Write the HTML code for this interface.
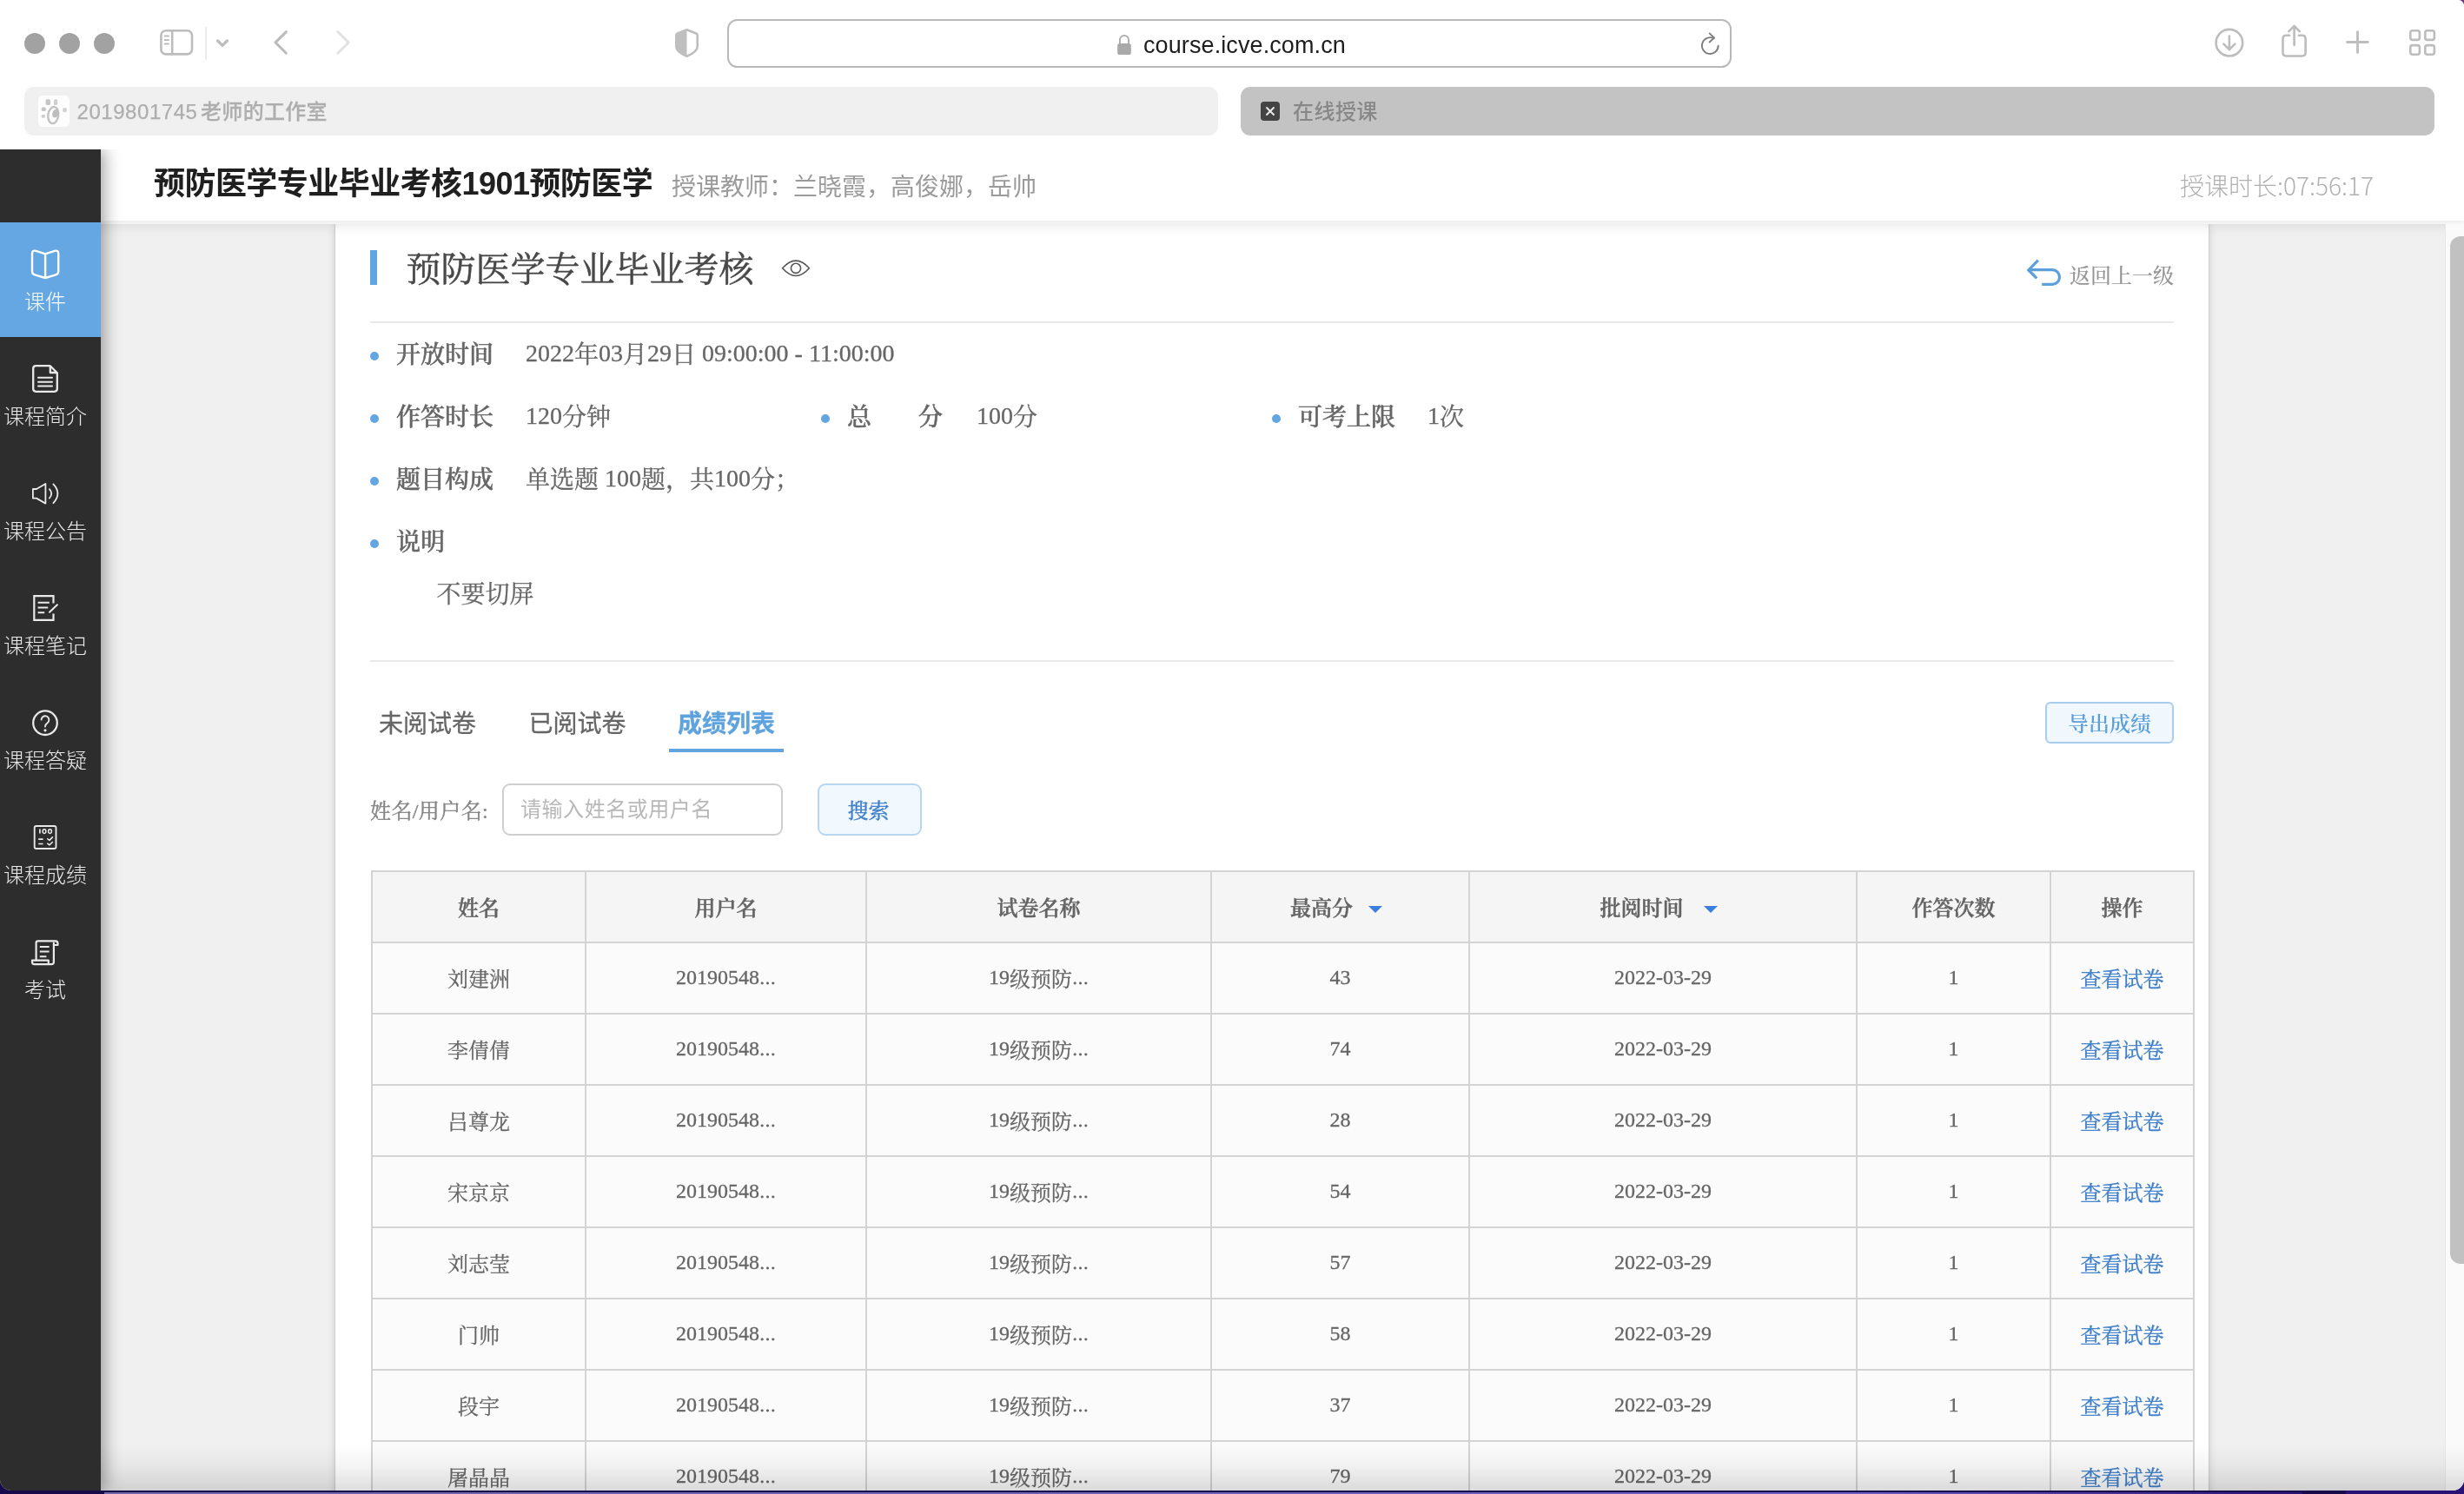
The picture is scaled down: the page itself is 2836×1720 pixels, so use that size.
<!DOCTYPE html>
<html lang="zh-CN">
<head>
<meta charset="utf-8">
<title>在线授课</title>
<style>
*{box-sizing:border-box;margin:0;padding:0}
html,body{width:2836px;height:1720px;overflow:hidden;background:#fff}
body{position:relative;will-change:transform;font-family:"Liberation Sans","Noto Sans CJK SC",sans-serif;color:#666}
.abs{position:absolute}
.sans{font-family:"Liberation Sans","Noto Sans CJK SC",sans-serif}
.serif{font-family:"Liberation Serif","Noto Serif CJK SC",serif}
svg{position:absolute;overflow:visible}
/* ---------- browser chrome ---------- */
#chrome{position:absolute;left:0;top:0;width:2836px;height:172px;background:#fff}
#trc{position:absolute;right:0;top:0;width:7px;height:7px;background:radial-gradient(circle at 0 100%,rgba(123,45,142,0) 6.6px,#7b2d8e 7.8px)}
.tl{position:absolute;top:38px;width:24px;height:24px;border-radius:50%;background:#a2a2a2}
#urlbar{position:absolute;left:837px;top:22px;width:1156px;height:56px;border:2px solid #b9b9b9;border-radius:11.5px;background:transparent}
#urltext{position:absolute;left:1316px;top:36px;font-size:27px;line-height:32px;color:#1d1d1d;letter-spacing:.1px;white-space:nowrap}
.tab{position:absolute;top:100px;height:56px;border-radius:11px}
#tab1{left:28px;width:1374px;background:#f0f0f0}
#tab2{left:1428px;width:1374px;background:#c3c3c3}
.tabtxt{position:absolute;top:12px;font-size:24px;line-height:32px;white-space:nowrap}
/* ---------- page ---------- */
#page{position:absolute;left:0;top:172px;width:2836px;height:1544px;background:#f0f0f0;overflow:hidden;border-radius:0 0 13px 13px;z-index:2}
#side{position:absolute;left:0;top:0;width:116px;height:1544px;background:#2d2d2d;z-index:5;box-shadow:4px 0 18px rgba(0,0,0,.38)}
.si{position:absolute;left:0;width:116px;height:132px;color:#e9e9e9}
.si.on{background:#65a7e2;color:#fff}
.si span{position:absolute;left:-16px;width:136px;text-align:center;top:76px;font-size:24px;line-height:32px;font-weight:300;white-space:nowrap}
.si svg{left:0;top:0;width:116px;height:132px;fill:none;stroke:currentColor;stroke-width:2.2;stroke-linecap:round;stroke-linejoin:round}
#head{position:absolute;left:116px;top:0;width:2720px;height:82px;background:#fff;z-index:4;box-shadow:0 2px 8px rgba(0,0,0,.05)}
#gap{position:absolute;left:116px;top:82px;width:2720px;height:4px;background:#f8f8f8;z-index:3}
#htitle{position:absolute;left:61px;top:16px;font-size:36px;line-height:48px;font-weight:700;color:#1f1f1f;white-space:nowrap;letter-spacing:-.55px}
#hsub{position:absolute;left:657px;top:24px;font-size:28px;line-height:40px;color:#9b9b9b;white-space:nowrap}
#htime{position:absolute;right:104px;top:21px;font-size:28px;line-height:40px;color:#b0b0b0;font-weight:300;white-space:nowrap;font-family:"Noto Sans CJK SC","Liberation Sans",sans-serif}
#card{position:absolute;left:386px;top:86px;width:2156px;height:1500px;background:#fff;box-shadow:0 0 0 1px rgba(0,0,0,.07),0 0 9px rgba(0,0,0,.17);z-index:2}
#hshadow{position:absolute;left:116px;top:86px;width:2698px;height:16px;background:linear-gradient(to bottom,rgba(0,0,0,.05),rgba(0,0,0,.012) 60%,rgba(0,0,0,0));z-index:3}
#strack{position:absolute;left:2814px;top:86px;width:22px;height:1460px;background:#fafafa;border-left:1px solid #e6e6e6;z-index:6}
#sthumb{position:absolute;left:2820px;top:100px;width:30px;height:1183px;border-radius:12px;background:#c1c1c1;z-index:7}
#bottomfade{position:absolute;left:116px;bottom:0;width:2720px;height:54px;background:linear-gradient(to bottom,rgba(0,0,0,0),rgba(0,0,0,.045) 50%,rgba(0,0,0,.13));z-index:8}
#deskstrip{position:absolute;left:0;top:1696px;width:2836px;height:24px;background:#160a4a;z-index:1}
#deskstrip i{position:absolute;left:120px;top:22px;width:2530px;height:2px;background:linear-gradient(to right,#6f66a8,#6b5cc0 80%,#2a1174)}
#deskstrip u{position:absolute;left:2700px;top:0;width:136px;height:24px;background:#2a1174}

/* ---------- card content (coords relative to card: abs-386, abs-258) ---------- */
#card .t{position:absolute;white-space:nowrap;line-height:1}
#card .sf{font-family:"Liberation Serif","Noto Serif CJK SC",serif}
#bar{position:absolute;left:40px;top:30px;width:8px;height:40px;background:#62a6e1}
#ctitle{left:81.5px;top:33px;font-size:40px;color:#484848;font-weight:400;-webkit-text-stroke:.5px currentColor}
#back{left:1996px;top:48px;font-size:24px;color:#949494;font-weight:500}
.hr{position:absolute;left:40px;width:2076px;height:2px;background:#e9e9e9}
.dot{position:absolute;width:10px;height:10px;border-radius:50%;background:#62a6e1}
.lab{font-size:28px;font-weight:500;-webkit-text-stroke:.55px currentColor;color:#666;width:110px}
.val{font-size:28px;color:#666;font-weight:400;-webkit-text-stroke:.3px currentColor}
.tabx{font-size:28px;color:#666;font-family:"Liberation Sans","Noto Sans CJK SC",sans-serif;-webkit-text-stroke:.3px currentColor}
#uline{position:absolute;left:384px;top:604px;width:132px;height:4px;background:#62a6e1}
#export{position:absolute;left:1968px;top:550px;width:148px;height:48px;border:2px solid #a9cdee;border-radius:6px;background:#f1f8fd}
#slabel{left:40px;top:663.5px;font-size:24px;letter-spacing:.4px;color:#858585;-webkit-text-stroke:.4px currentColor}
#sinput{position:absolute;left:191.5px;top:644px;width:323.5px;height:60px;border:2px solid #cfcfcf;border-radius:9px;background:#fff}
#sph{left:213px;top:662px;letter-spacing:.55px;font-size:24px;color:#b8b8b8;font-family:"Liberation Sans","Noto Sans CJK SC",sans-serif}
#sbtn{position:absolute;left:555px;top:644px;width:120px;height:60px;border:2px solid #b7d6f2;border-radius:9px;background:#f1f8fe}
#tbl{position:absolute;left:41px;top:744px;border-collapse:collapse;table-layout:fixed;width:2097px;font-family:"Liberation Serif","Noto Serif CJK SC",serif;font-size:24px;color:#666}
#tbl td,#tbl th{border:2px solid #d4d4d4;height:82px;text-align:center;vertical-align:middle;padding:0;line-height:30px;white-space:nowrap;background:#fbfbfb;font-weight:400;-webkit-text-stroke:.28px currentColor}
#tbl th{background:#f5f5f5;font-weight:600;-webkit-text-stroke:.45px currentColor;color:#646464}
#tbl td,#tbl th{padding-top:3px}
.el{font-size:19px;line-height:0;letter-spacing:0;position:relative;top:-2.5px;-webkit-text-stroke:.75px currentColor}
#tbl a{color:#3f7fca;text-decoration:none;-webkit-text-stroke:.35px currentColor}
.sw{position:relative;display:inline-block}
.tri{position:absolute;left:100%;top:12px;width:0;height:0;border-left:8px solid transparent;border-right:8px solid transparent;border-top:8.5px solid #3b7edb}
.n{font-weight:400;position:relative;top:-2.5px;-webkit-text-stroke:.3px currentColor}
</style>
</head>
<body>
<!-- ======= Safari chrome ======= -->
<div id="chrome">
  <div class="tl" style="left:28px"></div><div class="tl" style="left:68px"></div><div class="tl" style="left:108px"></div>

  <!-- sidebar toggle -->
  <svg style="left:0;top:0;width:2836px;height:90px" viewBox="0 0 2836 90" fill="none" stroke-linecap="round" stroke-linejoin="round">
    <g stroke="#bdbdbd" stroke-width="2.6">
      <rect x="185.4" y="35.2" width="35.6" height="27.2" rx="5.5"/>
      <path d="M198.2 35.2 V62.4"/>
    </g>
    <g stroke="#bdbdbd" stroke-width="2">
      <path d="M189.6 41.6 H194 M189.6 46 H194 M189.6 50.4 H194"/>
    </g>
    <path d="M237 32 V68" stroke="#ebebeb" stroke-width="2"/>
    <path d="M250.6 47 L256 52.4 L261.4 47" stroke="#bdbdbd" stroke-width="3.2"/>
    <path d="M329.4 36.6 L317 48.9 L329.4 61.2" stroke="#bcbcbc" stroke-width="3"/>
    <path d="M388.8 36.6 L401.2 48.9 L388.8 61.2" stroke="#e3e3e3" stroke-width="3"/>
    <!-- shield -->
    <path d="M790.5 34.3 L801.2 38.5 Q802.7 39.1 802.7 40.7 V53.4 C802.7 58.2 797.5 61.8 790.5 64.7 C783.5 61.8 778.3 58.2 778.3 53.4 V40.7 Q778.3 39.1 779.8 38.5 Z" stroke="#bdbdbd" stroke-width="2.6"/>
    <path d="M790.5 34.3 L779.8 38.5 Q778.3 39.1 778.3 40.7 V53.4 C778.3 58.2 783.5 61.8 790.5 64.7 Z" fill="#bfbfbf" stroke="none"/>
    <!-- lock -->
    <rect x="1286.2" y="50" width="15.6" height="13" rx="2.6" fill="#a9a9a9" stroke="none"/>
    <path d="M1288.9 50.5 V46 A5.1 5.1 0 0 1 1299.1 46 V50.5" stroke="#a9a9a9" stroke-width="1.8"/>
    <!-- reload -->
    <path d="M1977.7 52.6 A9.4 9.4 0 1 1 1972.6 44.2" stroke="#7f7f7f" stroke-width="1.9"/>
    <path d="M1967.6 38.4 L1973 43.5 L1967.6 48.5" stroke="#7f7f7f" stroke-width="1.9"/>
    <!-- download -->
    <g stroke="#bdbdbd" stroke-width="2.6">
      <circle cx="2565.9" cy="49.2" r="15.3"/>
      <path d="M2565.9 41.6 V56.4 M2559.4 50.6 L2565.9 57 L2572.4 50.6"/>
      <!-- share -->
      <path d="M2635.2 40.8 H2631.4 Q2627.5 40.8 2627.5 44.7 V60.6 Q2627.5 64.5 2631.4 64.5 H2649.7 Q2653.6 64.5 2653.6 60.6 V44.7 Q2653.6 40.8 2649.7 40.8 H2645.9"/>
      <path d="M2640.6 52 V30.4 M2634.4 36.2 L2640.6 30 L2646.8 36.2"/>
      <!-- plus -->
      <path d="M2701.6 48.5 H2725.4 M2713.5 36.6 V60.4" stroke-width="2.8"/>
      <!-- grid -->
      <rect x="2774.3" y="35.3" width="10.6" height="10.6" rx="2.4"/>
      <rect x="2791.3" y="35.3" width="10.6" height="10.6" rx="2.4"/>
      <rect x="2774.3" y="52.1" width="10.6" height="10.6" rx="2.4"/>
      <rect x="2791.3" y="52.1" width="10.6" height="10.6" rx="2.4"/>
    </g>
  </svg>

  <div id="trc"></div>
  <div id="urlbar"></div>
  <div id="urltext">course.icve.com.cn</div>
  <div class="tab" id="tab1">
    <div class="abs" style="left:16px;top:10px;width:36px;height:36px;border-radius:5px;background:#fdfdfd"></div>
    <svg style="left:16px;top:10px;width:36px;height:36px" viewBox="0 0 36 36">
      <g fill="#c6c6c6"><rect x="8.6" y="4.2" width="5.4" height="6.8" rx="1.6"/><rect x="18" y="4.2" width="4.2" height="6.8" rx="1.6" fill="#cfcfcf"/>
      <rect x="3.8" y="13.4" width="5" height="4.6" rx="1.4"/><rect x="3.8" y="22" width="4.2" height="3.8" rx="1.2" fill="#cfcfcf"/><rect x="28.2" y="14.2" width="4.6" height="5" rx="1.4" fill="#d2d2d2"/></g>
      <ellipse cx="17.3" cy="22.6" rx="5.9" ry="9.6" fill="none" stroke="#c2c2c2" stroke-width="2.4" transform="rotate(8 17.3 22.6)"/>
      <ellipse cx="19.8" cy="20.6" rx="3.4" ry="5" fill="#bdbdbd" transform="rotate(18 19.8 20.6)"/>
    </svg>
    <div class="tabtxt" style="left:60.5px;top:13px;color:#aeaeae;letter-spacing:.3px;word-spacing:-3.4px;font-weight:500;-webkit-text-stroke:.25px currentColor"><span style="letter-spacing:.55px;font-weight:400">2019801745</span> 老师的工作室</div>
  </div>
  <div class="tab" id="tab2">
    <div class="abs" style="left:23px;top:17px;width:22px;height:22px;border-radius:4px;background:#444"></div>
    <svg style="left:23px;top:17px;width:22px;height:22px" viewBox="0 0 22 22"><path d="M7 7 L15 15 M15 7 L7 15" stroke="#ececec" stroke-width="1.9" stroke-linecap="round" fill="none"/></svg>
    <div class="tabtxt" style="left:60px;top:13px;color:#878787;letter-spacing:.45px;font-weight:500">在线授课</div>
  </div>
</div>

<!-- ======= page ======= -->
<div id="page">
  <div id="side">
    <div class="si on" style="top:84px"><svg viewBox="0 0 116 132"><path d="M52.1 36.4 L41.4 32.9 Q37 31.6 37 36 V56.4 Q37 59.4 40 60.3 L52.1 64 L64.2 60.3 Q67.2 59.4 67.2 56.4 V36 Q67.2 31.6 62.8 32.9 Z M52.1 36.4 V64" stroke-width="2.4"/></svg><span>课件</span></div>
    <div class="si" style="top:216px"><svg viewBox="0 0 116 132"><path d="M57.8 33.2 H41.4 Q38.2 33.2 38.2 36.4 V59.6 Q38.2 62.8 41.4 62.8 H62.6 Q65.8 62.8 65.8 59.6 V41.2 Z M57.8 33.4 V41 H65.6" stroke-width="2.3"/><path d="M44 46.8 H60 M44 51.7 H60 M44 56.5 H60" stroke-width="2"/></svg><span>课程简介</span></div>
    <div class="si" style="top:348px"><svg viewBox="0 0 116 132"><path d="M52.4 37 L42 43 H37.9 V53.6 H42 L52.4 59.6 Z" stroke-width="1.8"/><path d="M56.9 43.2 Q61.6 48.3 56.9 53.5 M61.4 37.4 Q71.4 48.3 61.4 59.2" stroke-width="1.8"/></svg><span>课程公告</span></div>
    <div class="si" style="top:480px"><svg viewBox="0 0 116 132"><path d="M61.5 42.4 V34.2 H39.3 V61.8 H61.5 V54.6" stroke-width="2.2" stroke-linecap="butt" stroke-linejoin="miter"/><path d="M65.9 44.2 L57 52.8" stroke-width="2"/><path d="M43.6 41.8 H56.8 M43.6 47.5 H55.2 M43.6 53.2 H51.2" stroke-width="2" stroke-linecap="butt"/></svg><span>课程笔记</span></div>
    <div class="si" style="top:612px"><svg viewBox="0 0 116 132"><circle cx="52" cy="48.2" r="13.8" stroke-width="2.3"/><path d="M47.6 44.6 A4.4 4.4 0 1 1 54.6 48.2 Q52 50 52 52.6" stroke-width="1.9"/><circle cx="52" cy="56.8" r="1.6" fill="currentColor" stroke="none"/></svg><span>课程答疑</span></div>
    <div class="si" style="top:744px"><svg viewBox="0 0 116 132"><rect x="39.7" y="35" width="24.8" height="26" rx="2" stroke-width="1.9"/><path d="M45.9 38.6 V43.6" stroke-width="1.7" stroke-linecap="butt"/><ellipse cx="51" cy="41.1" rx="1.9" ry="2.3" stroke-width="1.5"/><ellipse cx="57.5" cy="41.1" rx="1.9" ry="2.3" stroke-width="1.5"/><path d="M44.2 50.1 H49.6 M44.2 55.5 H49.6" stroke-width="1.7" stroke-linecap="butt"/><path d="M54.8 49.8 L57 51.4 L60.4 47.9 M54.8 55.2 L57 56.8 L60.4 53.5" stroke-width="1.6"/></svg><span>课程成绩</span></div>
    <div class="si" style="top:876px"><svg viewBox="0 0 116 132"><path d="M41.6 57.6 V37.6 Q41.6 35.4 43.8 35.4 H63.6 Q66.5 35.4 66.5 38.3 V40 H62" stroke-width="2.2"/><path d="M61.9 37.6 V59.6 Q61.9 62.2 59.3 62.2 H39.6 Q37 62.2 37 59.6 V57.7 H55.8 V60.6" stroke-width="2.2"/><path d="M45.8 42.1 H56.6 M45.8 47.6 H56.6 M45.8 53.2 H53.4" stroke-width="2" stroke-linecap="butt"/></svg><span>考试</span></div>
  </div>
  <div id="head">
    <div id="htitle">预防医学专业毕业考核1901预防医学</div>
    <div id="hsub">授课教师：兰晓霞，高俊娜，岳帅</div>
    <div id="htime">授课时长:07:56:17</div>
  </div>
  <div id="gap"></div>
  <div id="hshadow"></div>
  <div id="card">

    <div id="bar"></div>
    <div class="t sf" id="ctitle">预防医学专业毕业考核</div>
    <svg style="left:512px;top:40px;width:36px;height:22px" viewBox="0 0 36 22" fill="none" stroke="#555" stroke-width="1.6"><path d="M2.6 10.8 Q18 -6.6 33.4 10.8 Q18 28.2 2.6 10.8 Z" stroke-linejoin="round"/><circle cx="18" cy="10.8" r="5.6"/></svg>
    <svg style="left:1944px;top:38px;width:44px;height:36px" viewBox="0 0 44 36" fill="none" stroke="#5b9fdb" stroke-width="3.2"><path d="M15.8 3.6 L4.8 15 L14.2 24.4"/><path d="M5.4 14.7 H32.2 A8.3 8.3 0 0 1 32.2 31.3 H20.2"/></svg>
    <div class="t sf" id="back">返回上一级</div>
    <div class="hr" style="top:112px"></div>
<div class="dot" style="left:40px;top:147px"></div><div class="t sf lab" style="left:70px;top:137px">开放时间</div><div class="t sf val" style="left:219px;top:137px"><b class="n">2022</b>年<b class="n">03</b>月<b class="n">29</b>日 <b class="n">09:00:00 - 11:00:00</b></div>
<div class="dot" style="left:40px;top:219px"></div><div class="t sf lab" style="left:70px;top:209px">作答时长</div><div class="t sf val" style="left:219px;top:209px"><b class="n">120</b>分钟</div>
<div class="dot" style="left:559px;top:219px"></div><div class="t sf lab" style="left:589px;top:209px;letter-spacing:0"><span style="float:left">总</span><span style="float:right">分</span></div><div class="t sf val" style="left:738px;top:209px"><b class="n">100</b>分</div>
<div class="dot" style="left:1078px;top:219px"></div><div class="t sf lab" style="left:1108px;top:209px">可考上限</div><div class="t sf val" style="left:1257px;top:209px"><b class="n">1</b>次</div>
<div class="dot" style="left:40px;top:291px"></div><div class="t sf lab" style="left:70px;top:281px">题目构成</div><div class="t sf val" style="left:219px;top:281px">单选题 <b class="n">100</b>题，共<b class="n">100</b>分；</div>
<div class="dot" style="left:40px;top:363px"></div><div class="t sf lab" style="left:70px;top:353px">说明</div>
    <div class="t sf val" style="left:116.5px;top:413px">不要切屏</div>
    <div class="hr" style="top:502px"></div>
    <div class="t tabx" style="left:50px;top:562px">未阅试卷</div>
    <div class="t tabx" style="left:222.5px;top:562px">已阅试卷</div>
    <div class="t tabx" style="left:394px;top:562px;color:#5fa3de;font-weight:700">成绩列表</div>
    <div id="uline"></div>
    <div id="export"></div>
    <div class="t sf" style="left:1994px;top:564px;font-size:24px;color:#5b9fdb;font-weight:600">导出成绩</div>
    <div class="t sf" id="slabel">姓名/用户名:</div>
    <div id="sinput"></div>
    <div class="t" id="sph">请输入姓名或用户名</div>
    <div id="sbtn"></div>
    <div class="t sf" style="left:589.5px;top:663.5px;font-size:24px;color:#3f7fca;-webkit-text-stroke:.4px currentColor">搜索</div>
    <table id="tbl">
      <colgroup><col style="width:246px"><col style="width:323px"><col style="width:397px"><col style="width:297px"><col style="width:446px"><col style="width:223px"><col style="width:165px"></colgroup>
      <tr><th>姓名</th><th>用户名</th><th>试卷名称</th><th style="padding-right:43px"><span class="sw">最高分<i class="tri" style="margin-left:17.5px"></i></span></th><th style="padding-right:49px"><span class="sw">批阅时间<i class="tri" style="margin-left:23px"></i></span></th><th>作答次数</th><th>操作</th></tr>
      <tr><td>刘建洲</td><td><b class="n">20190548</b><span class="el">…</span></td><td><b class="n">19</b>级预防<span class="el">…</span></td><td><b class="n">43</b></td><td><b class="n">2022-03-29</b></td><td><b class="n">1</b></td><td><a>查看试卷</a></td></tr>
      <tr><td>李倩倩</td><td><b class="n">20190548</b><span class="el">…</span></td><td><b class="n">19</b>级预防<span class="el">…</span></td><td><b class="n">74</b></td><td><b class="n">2022-03-29</b></td><td><b class="n">1</b></td><td><a>查看试卷</a></td></tr>
      <tr><td>吕尊龙</td><td><b class="n">20190548</b><span class="el">…</span></td><td><b class="n">19</b>级预防<span class="el">…</span></td><td><b class="n">28</b></td><td><b class="n">2022-03-29</b></td><td><b class="n">1</b></td><td><a>查看试卷</a></td></tr>
      <tr><td>宋京京</td><td><b class="n">20190548</b><span class="el">…</span></td><td><b class="n">19</b>级预防<span class="el">…</span></td><td><b class="n">54</b></td><td><b class="n">2022-03-29</b></td><td><b class="n">1</b></td><td><a>查看试卷</a></td></tr>
      <tr><td>刘志莹</td><td><b class="n">20190548</b><span class="el">…</span></td><td><b class="n">19</b>级预防<span class="el">…</span></td><td><b class="n">57</b></td><td><b class="n">2022-03-29</b></td><td><b class="n">1</b></td><td><a>查看试卷</a></td></tr>
      <tr><td>门帅</td><td><b class="n">20190548</b><span class="el">…</span></td><td><b class="n">19</b>级预防<span class="el">…</span></td><td><b class="n">58</b></td><td><b class="n">2022-03-29</b></td><td><b class="n">1</b></td><td><a>查看试卷</a></td></tr>
      <tr><td>段宇</td><td><b class="n">20190548</b><span class="el">…</span></td><td><b class="n">19</b>级预防<span class="el">…</span></td><td><b class="n">37</b></td><td><b class="n">2022-03-29</b></td><td><b class="n">1</b></td><td><a>查看试卷</a></td></tr>
      <tr><td>屠晶晶</td><td><b class="n">20190548</b><span class="el">…</span></td><td><b class="n">19</b>级预防<span class="el">…</span></td><td><b class="n">79</b></td><td><b class="n">2022-03-29</b></td><td><b class="n">1</b></td><td><a>查看试卷</a></td></tr>
    </table>
  </div>
  <div id="strack"></div>
  <div id="sthumb"></div>
  <div id="bottomfade"></div>
</div>
<div id="deskstrip"><u></u><i></i></div>
</body>
</html>
